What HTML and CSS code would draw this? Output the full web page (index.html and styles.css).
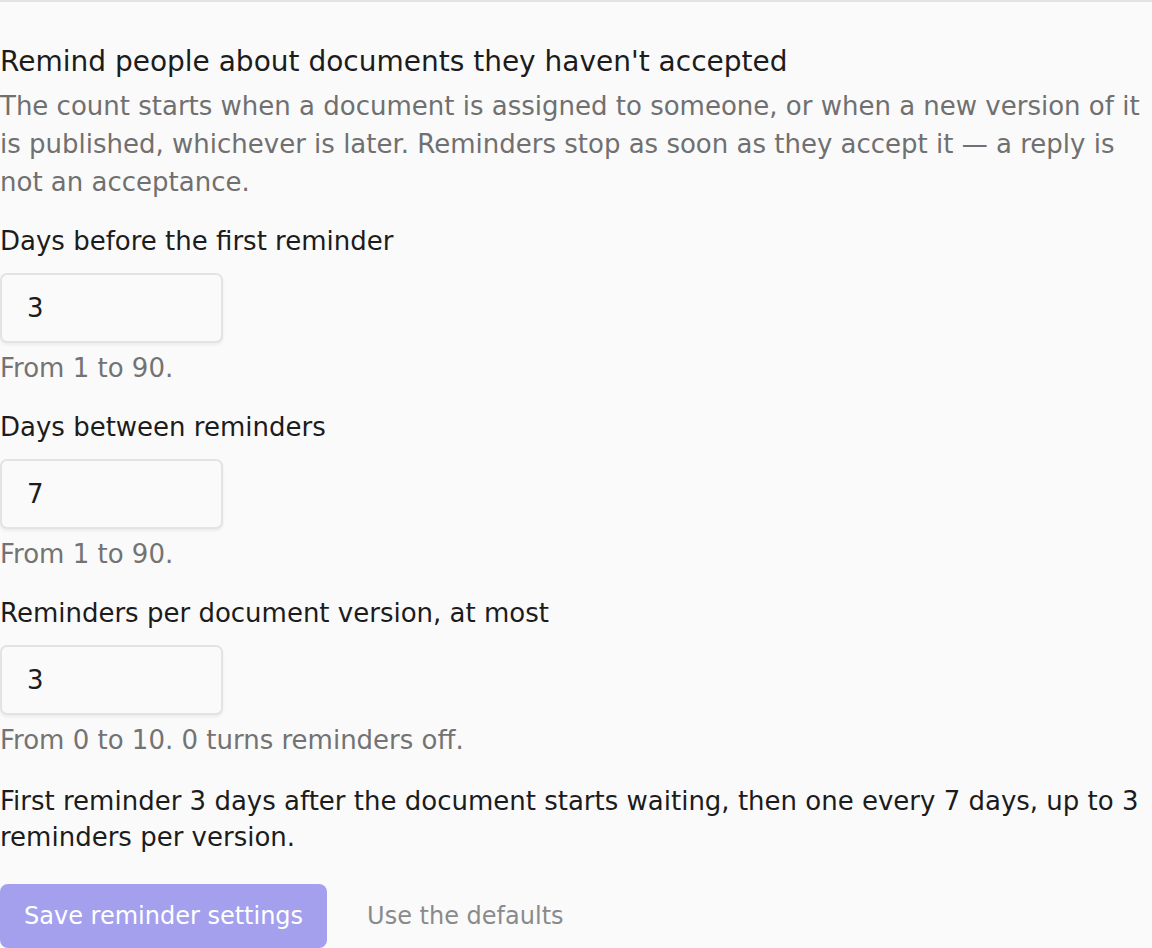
FILE: index.html
```html
<!DOCTYPE html>
<html lang="en">
<head>
<meta charset="utf-8">
<title>Reminder settings</title>
<link rel="stylesheet" href="styles.css">
</head>
<body>
<section class="panel">
  <h2 class="title">Remind people about documents they haven't accepted</h2>
  <p class="desc">The count starts when a document is assigned to someone, or when a new version of it is published, whichever is later. Reminders stop as soon as they accept it — a reply is not an acceptance.</p>

  <div class="field">
    <label class="label" for="first">Days before the first reminder</label>
    <input class="input" id="first" type="text" value="3">
    <div class="help">From 1 to 90.</div>
  </div>

  <div class="field">
    <label class="label" for="between">Days between reminders</label>
    <input class="input" id="between" type="text" value="7">
    <div class="help">From 1 to 90.</div>
  </div>

  <div class="field">
    <label class="label" for="max">Reminders per document version, at most</label>
    <input class="input" id="max" type="text" value="3">
    <div class="help">From 0 to 10. 0 turns reminders off.</div>
  </div>

  <p class="summary">First reminder 3 days after the document starts waiting, then one every 7 days, up to 3 reminders per version.</p>

  <div class="actions">
    <button class="btn-primary" type="button" disabled>Save reminder settings</button>
    <button class="btn-link" type="button">Use the defaults</button>
  </div>
</section>
</body>
</html>
```

FILE: styles.css
```css
html, body {
  margin: 0;
  padding: 0;
  background: #fafafa;
}
body {
  font-family: "DejaVu Sans", sans-serif;
  font-size: 26px;
  color: #1c1c1c;
}
.panel {
  border-top: 2px solid #e2e2e2;
  padding-top: 39px;
}
.title {
  margin: 0;
  font-size: 28px;
  font-weight: normal;
  line-height: 42px;
  color: #1c1c1c;
}
.desc {
  margin: 4px 0 0;
  line-height: 38px;
  color: #707070;
}
.field {
  display: flex;
  flex-direction: column;
  align-items: flex-start;
  margin-top: 21px;
}
.label {
  line-height: 38px;
}
.input {
  margin-top: 13px;
  box-sizing: border-box;
  width: 223px;
  height: 70px;
  padding: 0 25px;
  border: 2px solid #e3e3e3;
  border-radius: 7px;
  background: #fafafa;
  box-shadow: 0 2px 3px rgba(0,0,0,0.06);
  font: inherit;
  color: #1c1c1c;
}
.help {
  margin-top: 6px;
  line-height: 38px;
  color: #737373;
}
.summary {
  margin: 24px 0 0;
  line-height: 36px;
}
.actions {
  display: flex;
  align-items: center;
  gap: 40px;
  margin-top: 29px;
}
.btn-primary {
  height: 64px;
  padding: 0 24px;
  border: none;
  border-radius: 8px;
  background: #a4a0ee;
  color: #ffffff;
  font: inherit;
  font-size: 24px;
}
.btn-link {
  border: none;
  background: none;
  padding: 0;
  font: inherit;
  font-size: 24px;
  color: #8a8a8a;
}
```
